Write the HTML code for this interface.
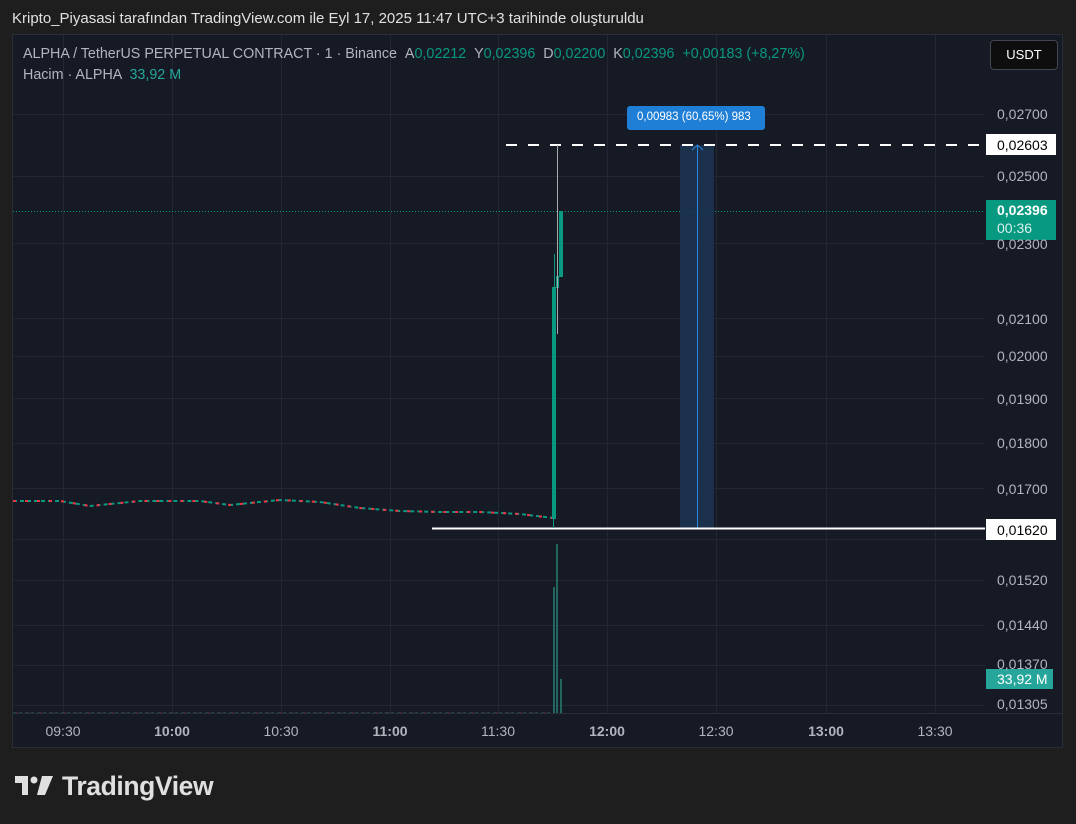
<!DOCTYPE html>
<html><head><meta charset="utf-8"><style>
body{margin:0;width:1076px;height:824px;background:#1e1e1e;overflow:hidden;font-family:"Liberation Sans",sans-serif;position:relative}
.a{position:absolute}
.pl{position:absolute;left:997px;color:#b2b5be;font-size:14px}
.tl{position:absolute;top:723px;color:#b2b5be;font-size:14px;transform:translateX(-50%)}
</style></head><body>
<div class="a" style="left:12px;top:10px;color:#e0e0e0;font-size:15px">Kripto_Piyasasi tarafından TradingView.com ile Eyl 17, 2025 11:47 UTC+3 tarihinde oluşturuldu</div>
<div class="a" style="left:12px;top:34px;width:1051px;height:714px;background:#161a25;border:1px solid #2a2e39;box-sizing:border-box"></div>
<svg class="a" style="left:0;top:0" width="1076" height="824">
<g stroke="#232733" stroke-width="1">
<line x1="13" x2="985" y1="114.5" y2="114.5"/><line x1="13" x2="985" y1="176.5" y2="176.5"/><line x1="13" x2="985" y1="243.5" y2="243.5"/><line x1="13" x2="985" y1="318.5" y2="318.5"/><line x1="13" x2="985" y1="356.5" y2="356.5"/><line x1="13" x2="985" y1="398.5" y2="398.5"/><line x1="13" x2="985" y1="443.5" y2="443.5"/><line x1="13" x2="985" y1="488.5" y2="488.5"/><line x1="13" x2="985" y1="539.5" y2="539.5"/><line x1="13" x2="985" y1="580.5" y2="580.5"/><line x1="13" x2="985" y1="625.5" y2="625.5"/><line x1="13" x2="985" y1="665.5" y2="665.5"/><line x1="13" x2="985" y1="705.5" y2="705.5"/>
<line x1="63.5" x2="63.5" y1="35" y2="713"/><line x1="172.5" x2="172.5" y1="35" y2="713"/><line x1="281.5" x2="281.5" y1="35" y2="713"/><line x1="390.5" x2="390.5" y1="35" y2="713"/><line x1="498.5" x2="498.5" y1="35" y2="713"/><line x1="607.5" x2="607.5" y1="35" y2="713"/><line x1="716.5" x2="716.5" y1="35" y2="713"/><line x1="826.5" x2="826.5" y1="35" y2="713"/><line x1="935.5" x2="935.5" y1="35" y2="713"/>
</g>
<line x1="13" x2="985" y1="211.5" y2="211.5" stroke="#089981" stroke-dasharray="1 2"/>
<polyline fill="none" stroke="#089981" stroke-width="2" stroke-dasharray="4 3" points="13,501 60,501 90,506 140,501 200,501 230,505 280,500 320,502 360,508 400,511 440,512 480,512 520,514 553,518"/>
<polyline fill="none" stroke="#f23645" stroke-width="2" stroke-dasharray="3 9" points="13,501 60,501 90,506 140,501 200,501 230,505 280,500 320,502 360,508 400,511 440,512 480,512 520,514 553,518"/>
<line x1="13" x2="553" y1="713" y2="713" stroke="#2b6b63" stroke-dasharray="3 3"/>
<line x1="16" x2="553" y1="713" y2="713" stroke="#7a2e36" stroke-dasharray="2 10"/>
<rect x="680" y="145" width="34" height="383" fill="#1c3450" opacity="0.9"/>
<line x1="697.5" x2="697.5" y1="145" y2="528" stroke="#2b86e0"/>
<path d="M692 150 L697.5 145 L703 150" fill="none" stroke="#2b86e0"/>
<line x1="506" x2="985" y1="145" y2="145" stroke="#fff" stroke-width="2" stroke-dasharray="11 11"/>
<line x1="432" x2="985" y1="528.5" y2="528.5" stroke="#fff" stroke-width="2"/>
<rect x="552" y="287" width="4" height="232" fill="#089981"/><line x1="553.5" x2="553.5" y1="287" y2="528" stroke="#089981"/>
<rect x="556" y="276" width="3" height="12" fill="#089981"/><line x1="557.5" x2="557.5" y1="145" y2="334" stroke="#aaa"/>
<rect x="559" y="211" width="4" height="66" fill="#089981"/><line x1="554.5" x2="554.5" y1="254" y2="290" stroke="#089981"/>
<rect x="553" y="587" width="2" height="126" fill="#22675f"/><rect x="556" y="544" width="2" height="169" fill="#22675f"/><rect x="560" y="679" width="2" height="34" fill="#22675f"/>
<rect x="627" y="106" width="138" height="24" rx="3" fill="#1f7ed6"/>
<rect x="986" y="134" width="70" height="21" fill="#fff"/>
<rect x="986" y="200" width="70" height="40" fill="#089981"/>
<rect x="986" y="519" width="70" height="21" fill="#fff"/>
<rect x="986" y="669" width="67" height="20" fill="#26a69a"/>
<line x1="13" x2="1062" y1="713.5" y2="713.5" stroke="#2a2e39"/>
</svg>
<div class="a" style="left:990px;top:40px;width:68px;height:30px;background:#0e0e0e;border:1px solid #434651;border-radius:4px;box-sizing:border-box;color:#fff;font-size:13px;text-align:center;line-height:28px">USDT</div>
<div class="a" style="left:23px;top:46px;color:#b2b5be;font-size:14.3px;white-space:nowrap">ALPHA / TetherUS PERPETUAL CONTRACT · 1 · Binance &nbsp;A<span style="color:#089981">0,02212</span> &nbsp;Y<span style="color:#089981">0,02396</span> &nbsp;D<span style="color:#089981">0,02200</span> &nbsp;K<span style="color:#089981">0,02396 &nbsp;+0,00183 (+8,27%)</span></div>
<div class="a" style="left:23px;top:67px;color:#b2b5be;font-size:14.3px">Hacim · ALPHA &nbsp;<span style="color:#26a69a">33,92 M</span></div>
<div class="a" style="left:637px;top:111px;color:#fff;font-size:11.5px">0,00983 (60,65%) 983</div>
<div class="pl" style="top:106px">0,02700</div>
<div class="pl" style="top:137px;color:#000">0,02603</div>
<div class="pl" style="top:168px">0,02500</div>
<div class="pl" style="top:236px">0,02300</div>
<div class="pl" style="top:202px;color:#fff;font-weight:bold">0,02396</div>
<div class="pl" style="top:220px;color:#d6f0ea">00:36</div>
<div class="pl" style="top:311px">0,02100</div>
<div class="pl" style="top:348px">0,02000</div>
<div class="pl" style="top:391px">0,01900</div>
<div class="pl" style="top:435px">0,01800</div>
<div class="pl" style="top:481px">0,01700</div>
<div class="pl" style="top:522px;color:#000">0,01620</div>
<div class="pl" style="top:572px">0,01520</div>
<div class="pl" style="top:617px">0,01440</div>
<div class="pl" style="top:656px">0,01370</div>
<div class="pl" style="top:671px;color:#fff">33,92 M</div>
<div class="pl" style="top:696px">0,01305</div>
<div class="tl" style="left:63px">09:30</div><div class="tl" style="left:172px;font-weight:bold">10:00</div><div class="tl" style="left:281px">10:30</div><div class="tl" style="left:390px;font-weight:bold">11:00</div><div class="tl" style="left:498px">11:30</div><div class="tl" style="left:607px;font-weight:bold">12:00</div><div class="tl" style="left:716px">12:30</div><div class="tl" style="left:826px;font-weight:bold">13:00</div><div class="tl" style="left:935px">13:30</div>
<svg class="a" style="left:15px;top:776px" width="40" height="20"><path d="M0 0H13V19H7V7H0Z" fill="#e0e0e0"/><circle cx="19" cy="4" r="3.5" fill="#e0e0e0"/><path d="M27 0H38L30 19H22Z" fill="#e0e0e0"/></svg>
<div class="a" style="left:62px;top:771px;color:#e0e0e0;font-size:26.5px;font-weight:bold;letter-spacing:-0.4px">TradingView</div>
</body></html>
